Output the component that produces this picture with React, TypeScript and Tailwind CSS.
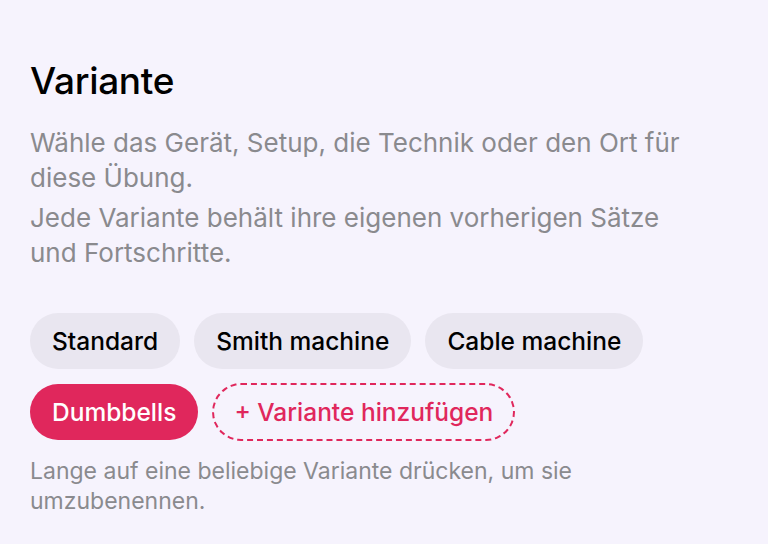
const variants = ["Standard", "Smith machine", "Cable machine"];

export default function App() {
  return (
    <div
      className="min-h-[544px] w-full bg-[#f6f3fd] px-[30px] pt-[58px]"
      style={{ fontFamily: "Inter, 'Noto Sans', sans-serif" }}
    >
      <h1 className="text-[37px] leading-[46px] font-medium text-black tracking-[-0.3px]">
        Variante
      </h1>
      <div className="mt-[21px] max-w-[665px] text-[26px] leading-[35px] text-[#8a8a8e]">
        <p>Wähle das Gerät, Setup, die Technik oder den Ort für diese Übung.</p>
        <p className="mt-[5px]">
          Jede Variante behält ihre eigenen vorherigen Sätze und Fortschritte.
        </p>
      </div>

      <div className="mt-[43px] flex flex-wrap gap-x-[14px] gap-y-[15px] max-w-[700px]">
        {variants.map((v) => (
          <button
            key={v}
            className="h-[56px] rounded-full bg-[#e9e6f0] px-[22px] text-[24.5px] font-medium text-black"
          >
            {v}
          </button>
        ))}
        <button className="h-[56px] rounded-full bg-[#e0275c] px-[22px] text-[24.5px] font-medium text-white">
          Dumbbells
        </button>
        <button className="h-[58px] -mt-[1px] rounded-full border-2 border-dashed border-[#e0275c] px-[20px] text-[24.5px] font-medium text-[#e0275c]">
          + Variante hinzufügen
        </button>
      </div>

      <p className="mt-[15px] max-w-[640px] text-[23px] leading-[30px] text-[#8a8a8e]">
        Lange auf eine beliebige Variante drücken, um sie umzubenennen.
      </p>
    </div>
  );
}
